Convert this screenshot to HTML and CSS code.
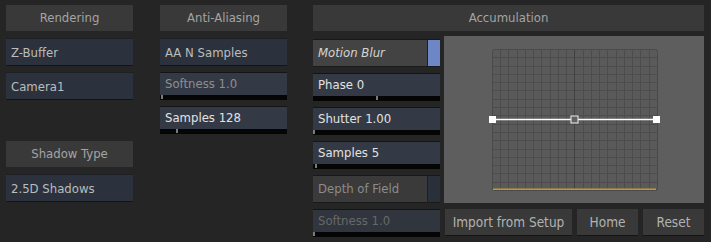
FILE: index.html
```html
<!DOCTYPE html>
<html lang="en">
<head>
<meta charset="UTF-8">
<title>Render Settings</title>
<link rel="stylesheet" href="styles.css">
</head>
<body>
<div class="panel">
    <div class="col">
        <div class="head">Rendering</div>
        <div class="field">Z-Buffer</div>
        <div class="field">Camera1</div>
        <div class="head shadow-head">Shadow Type</div>
        <div class="field">2.5D Shadows</div>
    </div>

    <div class="col">
        <div class="head">Anti-Aliasing</div>
        <div class="field">AA N Samples</div>
        <div class="slider dim">
            <div class="label">Softness 1.0</div>
            <div class="track"><span class="tick" style="left: 1px"></span></div>
        </div>
        <div class="slider bright">
            <div class="label">Samples 128</div>
            <div class="track"><span class="tick" style="left: 16px"></span></div>
        </div>
    </div>

    <div class="col wide">
        <div class="head">Accumulation</div>
        <div class="accum">
            <div class="list">
                <div class="toggle on">
                    <div class="label">Motion Blur</div>
                    <div class="box"></div>
                </div>
                <div class="slider bright">
                    <div class="label">Phase 0</div>
                    <div class="track"><span class="tick" style="left: 63px"></span></div>
                </div>
                <div class="slider bright">
                    <div class="label">Shutter 1.00</div>
                    <div class="track"><span class="tick" style="left: 0"></span></div>
                </div>
                <div class="slider bright">
                    <div class="label">Samples 5</div>
                    <div class="track"><span class="tick" style="left: 2px"></span></div>
                </div>
                <div class="toggle">
                    <div class="label">Depth of Field</div>
                    <div class="box"></div>
                </div>
                <div class="slider faded">
                    <div class="label">Softness 1.0</div>
                    <div class="track"><span class="tick" style="left: 0"></span></div>
                </div>
            </div>
            <div class="side">
                <div class="graph">
                    <svg width="260" height="167" viewBox="0 0 260 167">
                        <rect x="48.5" y="13.5" width="165" height="141" rx="2" fill="#5a5a5a" stroke="#4a4a4a"/>
                        <!-- grid -->
                        <path stroke="#4c4c4c" stroke-width="1" fill="none"
                              d="M56.5 14V154M64.5 14V154M73.5 14V154M81.5 14V154M89.5 14V154M97.5 14V154M106.5 14V154M114.5 14V154M122.5 14V154M139.5 14V154M147.5 14V154M155.5 14V154M163.5 14V154M172.5 14V154M180.5 14V154M188.5 14V154M196.5 14V154M205.5 14V154
                                 M49 21.5H213M49 30.5H213M49 38.5H213M49 46.5H213M49 54.5H213M49 63.5H213M49 71.5H213M49 79.5H213M49 88.5H213M49 96.5H213M49 104.5H213M49 113.5H213M49 121.5H213M49 129.5H213M49 137.5H213M49 146.5H213"/>
                        <line x1="130.5" y1="14" x2="130.5" y2="154" stroke="#404040" stroke-width="1"/>
                        <rect x="49" y="152.5" width="163" height="1.5" fill="#c39a2c"/>
                        <line x1="48" y1="83.5" x2="213" y2="83.5" stroke="#fff" stroke-width="1.5"/>
                        <rect x="45" y="80" width="7" height="7" fill="#fff"/>
                        <rect x="209" y="80" width="7" height="7" fill="#fff"/>
                        <rect x="127" y="80" width="7" height="7" fill="#606060" stroke="#d8d8d8" stroke-width="1.2"/>
                    </svg>
                </div>
                <div class="buttons">
                    <div class="btn import">Import from Setup</div>
                    <div class="btn">Home</div>
                    <div class="btn">Reset</div>
                </div>
            </div>
        </div>
    </div>
</div>
</body>
</html>
```

FILE: styles.css
```css
body {
    margin: 0;
    background: #252525;
    font-family: "DejaVu Sans Condensed", "DejaVu Sans", sans-serif;
    font-stretch: condensed;
    font-size: 13px;
}

.panel {
    display: flex;
    padding: 5px 6px;
    gap: 27px;
}

.col {
    width: 127px;
    display: flex;
    flex-direction: column;
    gap: 6px;
}

.col.wide {
    width: 391px;
    margin-left: -1px;
    gap: 4px;
}

.head {
    height: 26px;
    line-height: 26px;
    background: #393939;
    color: #a4a4a4;
    text-align: center;
    margin-bottom: 1px;
}

.shadow-head {
    margin-top: 35px;
}

.field {
    height: 26px;
    line-height: 27px;
    padding-left: 5px;
    background: #2b323d;
    border-top: 1px solid #1c1f24;
    border-bottom: 1px solid #121418;
    color: #bcbcbc;
}

.slider {
    height: 28px;
    display: flex;
    flex-direction: column;
    background: #343a45;
    border-top: 1px solid #141414;
    box-sizing: border-box;
}

.slider .label {
    flex: 1;
    line-height: 22px;
    padding-left: 5px;
}

.slider .track {
    height: 5px;
    background: #050505;
    position: relative;
}

.slider .tick {
    position: absolute;
    top: 0;
    width: 2px;
    height: 4px;
    background: #7a7a7a;
}

.slider.dim .label { color: #8e8e8e; }
.slider.bright .label { color: #e2e2e2; }
.slider.faded { background: #30353e; }
.slider.faded .label { color: #686868; }

.accum {
    display: flex;
    gap: 4px;
}

.list {
    width: 127px;
    padding-top: 3px;
    display: flex;
    flex-direction: column;
    gap: 6px;
}

.toggle {
    height: 28px;
    display: flex;
    background: #3a3a3a;
    border-top: 1px solid #181818;
    border-bottom: 1px solid #1a1a1a;
    box-sizing: border-box;
}

.toggle .label {
    flex: 1;
    line-height: 26px;
    padding-left: 5px;
    color: #8c8c8c;
    border-right: 1px solid #1e1e1e;
}

.toggle .box {
    width: 12px;
    background: #2a303a;
}

.toggle.on {
    background: #434343;
}

.toggle.on .label {
    font-style: italic;
    color: #d4d4d4;
}

.toggle.on .box {
    background: #6d87c6;
}

.side {
    width: 260px;
    display: flex;
    flex-direction: column;
    gap: 6px;
}

.graph {
    height: 167px;
    background: #5e5e5e;
}

.graph svg {
    display: block;
}

.buttons {
    display: flex;
    gap: 5px;
    padding-left: 1px;
}

.btn {
    width: 61px;
    height: 26px;
    line-height: 27px;
    background: #393939;
    border-bottom: 1px solid #141414;
    color: #b2b2b2;
    text-align: center;
    font-size: 13.5px;
}

.btn.import {
    width: 127px;
}
```
